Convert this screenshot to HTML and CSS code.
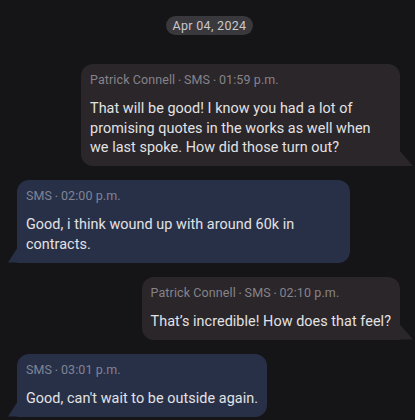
FILE: index.html
```html
<!DOCTYPE html>
<html>
<head>
<meta charset="utf-8">
<link rel="stylesheet" href="styles.css">
</head>
<body>
<div class="thread">
  <div class="date-row"><span class="date-pill">Apr 04, 2024</span></div>

  <div class="bubble out">
    <div class="meta">Patrick Connell<span class="dot">•</span>SMS<span class="dot">•</span>01:59 p.m.</div>
    <div class="text">That will be good! I know you had a lot of promising quotes in the works as well when we last spoke. How did those turn out?</div>
  </div>

  <div class="bubble in">
    <div class="meta">SMS<span class="dot">•</span>02:00 p.m.</div>
    <div class="text">Good, i think wound up with around 60k in contracts.</div>
  </div>

  <div class="bubble out">
    <div class="meta">Patrick Connell<span class="dot">•</span>SMS<span class="dot">•</span>02:10 p.m.</div>
    <div class="text">That’s incredible! How does that feel?</div>
  </div>

  <div class="bubble in">
    <div class="meta">SMS<span class="dot">•</span>03:01 p.m.</div>
    <div class="text">Good, can't wait to be outside again.</div>
  </div>
</div>
</body>
</html>
```
FILE: styles.css
```css
html, body {
  margin: 0;
  padding: 0;
  background: #151517;
  height: 100%;
  overflow: hidden;
}

.thread {
  display: flex;
  flex-direction: column;
  gap: 14px;
  padding-top: 16px;
  font-family: Roboto, "Liberation Sans", sans-serif;
}

.date-row {
  display: flex;
  justify-content: center;
  margin-bottom: 15px;
  padding-left: 4px;
}

.date-pill {
  background: #38383d;
  color: #c9c9ce;
  font-size: 12.5px;
  line-height: 19px;
  padding: 0 7px;
  border-radius: 9.5px;
  letter-spacing: 0.3px;
}

.bubble {
  position: relative;
  padding: 8px 9px 8.5px 9px;
  border-radius: 12px;
  box-sizing: border-box;
}

.bubble.out {
  align-self: flex-end;
  margin-right: 15px;
  max-width: 319px;
  background: #2a262a;
  border-bottom-right-radius: 0;
}

.bubble.in {
  align-self: flex-start;
  margin-left: 17px;
  max-width: 333px;
  background: #283048;
  border-bottom-left-radius: 0;
}

.bubble.out::after {
  content: "";
  position: absolute;
  right: -13px;
  bottom: 0;
  width: 13px;
  height: 15px;
  background: #2a262a;
  clip-path: polygon(0 0, 100% 100%, 0 100%);
}

.bubble.in::after {
  content: "";
  position: absolute;
  left: -9px;
  bottom: 0;
  width: 9px;
  height: 14px;
  background: #283048;
  clip-path: polygon(100% 0, 100% 100%, 0 100%);
}

.meta {
  color: #86838a;
  font-size: 12.5px;
  line-height: 16px;
  margin-bottom: 9px;
  white-space: nowrap;
  letter-spacing: 0.1px;
}

.bubble.in .meta {
  color: #7f8496;
}

.dot {
  font-size: 8px;
  margin: 0 3px;
  position: relative;
  top: -1px;
}

.text {
  color: #e2e2e4;
  font-size: 14.4px;
  line-height: 19.5px;
  letter-spacing: 0.05px;
}
```
